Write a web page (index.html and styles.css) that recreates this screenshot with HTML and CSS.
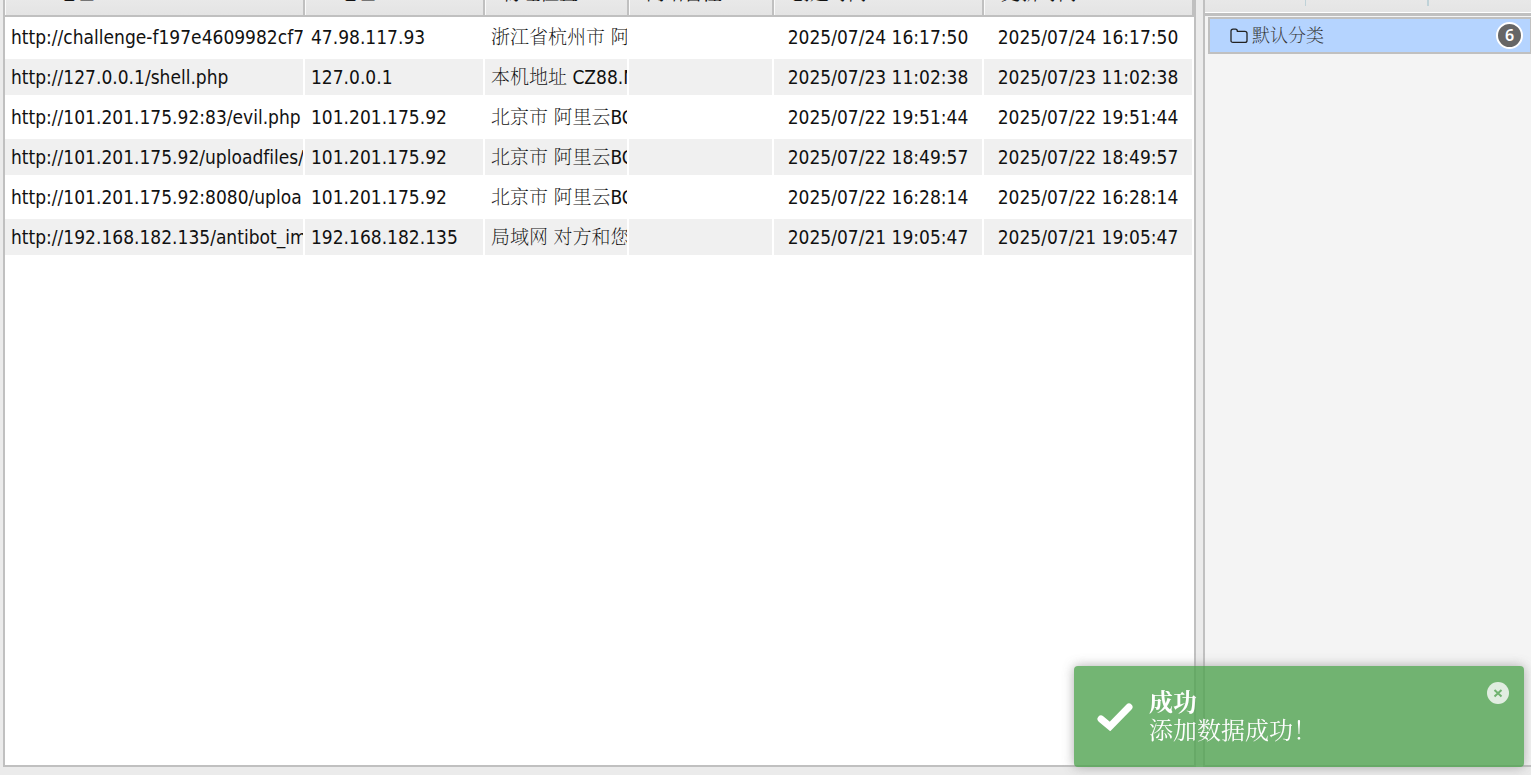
FILE: index.html
```html
<!DOCTYPE html>
<html lang="zh-CN">

<head>
    <meta charset="utf-8">
    <title>Shell</title>
    <link rel="stylesheet" href="styles.css">
</head>

<body>
    <div class="app">
        <main class="list">
            <table class="grid">
                <colgroup>
                    <col>
                    <col class="col-ip">
                    <col class="col-addr">
                    <col class="col-note">
                    <col class="col-time">
                    <col class="col-time">
                </colgroup>
                <thead>
                    <tr>
                        <th>URL地址</th>
                        <th>IP地址</th>
                        <th>物理位置</th>
                        <th>网站备注</th>
                        <th>创建时间</th>
                        <th>更新时间</th>
                    </tr>
                </thead>
                <tbody>
                    <tr>
                        <td>http://challenge-f197e4609982cf7</td>
                        <td>47.98.117.93</td>
                        <td>浙江省杭州市 阿</td>
                        <td></td>
                        <td class="time">2025/07/24 16:17:50</td>
                        <td class="time">2025/07/24 16:17:50</td>
                    </tr>
                    <tr>
                        <td>http://127.0.0.1/shell.php</td>
                        <td>127.0.0.1</td>
                        <td>本机地址 CZ88.N</td>
                        <td></td>
                        <td class="time">2025/07/23 11:02:38</td>
                        <td class="time">2025/07/23 11:02:38</td>
                    </tr>
                    <tr>
                        <td>http://101.201.175.92:83/evil.php</td>
                        <td>101.201.175.92</td>
                        <td>北京市 阿里云BG</td>
                        <td></td>
                        <td class="time">2025/07/22 19:51:44</td>
                        <td class="time">2025/07/22 19:51:44</td>
                    </tr>
                    <tr>
                        <td>http://101.201.175.92/uploadfiles/</td>
                        <td>101.201.175.92</td>
                        <td>北京市 阿里云BG</td>
                        <td></td>
                        <td class="time">2025/07/22 18:49:57</td>
                        <td class="time">2025/07/22 18:49:57</td>
                    </tr>
                    <tr>
                        <td>http://101.201.175.92:8080/uploa</td>
                        <td>101.201.175.92</td>
                        <td>北京市 阿里云BG</td>
                        <td></td>
                        <td class="time">2025/07/22 16:28:14</td>
                        <td class="time">2025/07/22 16:28:14</td>
                    </tr>
                    <tr>
                        <td>http://192.168.182.135/antibot_im</td>
                        <td>192.168.182.135</td>
                        <td>局域网 对方和您</td>
                        <td></td>
                        <td class="time">2025/07/21 19:05:47</td>
                        <td class="time">2025/07/21 19:05:47</td>
                    </tr>
                </tbody>
            </table>
        </main>

        <aside class="side">
            <div class="toolbar">
                <span class="sep"></span>
                <span class="sep wide"></span>
            </div>
            <a class="category" href="#">
                <svg class="folder" viewBox="0 0 18 16" aria-hidden="true">
                    <path d="M1 3.2Q1 1.2 3 1.2H5.6Q7.3 1.2 7.4 3.4H14.8Q17 3.4 17 5.4V12.4Q17 14.4 15 14.4H3Q1 14.4 1 12.4Z" />
                </svg>
                <span>默认分类</span>
                <span class="badge">6</span>
            </a>
        </aside>
    </div>

    <div class="toast" role="status">
        <svg class="check" viewBox="0 0 36 28" aria-hidden="true">
            <path d="M4 16L13 23.5L32 4" />
        </svg>
        <div class="toast-text">
            <div class="toast-title">成功</div>
            <div>添加数据成功！</div>
        </div>
        <button class="close" type="button" aria-label="关闭">
            <svg viewBox="0 0 22 22" aria-hidden="true">
                <circle cx="11" cy="11" r="11" />
                <path d="M7.5 8L14.5 14.5M14.5 8L7.5 14.5" />
            </svg>
        </button>
    </div>
</body>

</html>
```
FILE: styles.css
```css
* {
    box-sizing: border-box;
}

body {
    margin: 0;
    overflow: hidden;
    background: #ebebeb;
    color: #111;
    font-family: Tahoma, "DejaVu Sans Condensed", "Noto Serif CJK SC", "Noto Sans CJK SC", sans-serif;
    font-size: 19px;
    font-variant-ligatures: none;
}

/* the header rows are scrolled partly above the window */
.app {
    display: flex;
    gap: 7px;
    height: calc(100vh + 24px);
    margin-top: -24px;
    padding: 0 0 8px 3px;
}

.list {
    flex: 1;
    min-width: 0;
    overflow: hidden;
    background: #fff;
    border: 2px solid #c0c0c0;
    border-top: 0;
}

.grid {
    width: 100%;
    table-layout: fixed;
    border-spacing: 0;
}

.col-ip {
    width: 180px;
}

.col-addr {
    width: 144px;
}

.col-note {
    width: 145px;
}

.col-time {
    width: 210px;
}

.grid th {
    height: 41px;
    padding: 0 0 4px 17px;
    background: linear-gradient(#f0f0f0, #e4e4e4);
    border: solid #c0c0c0;
    border-width: 0 2px 2px 0;
    box-shadow: inset 1px 0 #fafafa;
    font-weight: 400;
    line-height: 35px;
    text-align: left;
    white-space: nowrap;
}

.grid td {
    height: 40px;
    padding: 0 0 0 6px;
    overflow: hidden;
    background-clip: padding-box;
    border: solid #fff;
    border-width: 2px 2px 2px 0;
    line-height: 36px;
    white-space: nowrap;
}

.grid td:nth-child(3) {
    font-weight: 200;
}

.grid tr:nth-child(even) td {
    background-color: #f0f0f0;
}

.grid .time {
    padding: 0;
    text-align: center;
}

.side {
    width: 328px;
    background: #f4f4f4;
    border: solid #c0c0c0;
    border-width: 0 0 2px 2px;
}

.toolbar {
    display: flex;
    height: 40px;
    padding: 0 0 7px 100px;
    background: linear-gradient(#efefef, #e4e4e4);
    border-bottom: 3px solid #c0c0c0;
    box-shadow: inset 0 -1px #fff;
}

.sep {
    width: 1px;
    background: #bfd2d8;
}

.sep.wide {
    width: 2px;
    margin-left: 121px;
}

.category {
    display: flex;
    align-items: center;
    height: 37px;
    margin: 1px 0 0 3px;
    padding: 0 7px 0 20px;
    background: #b5d4ff;
    border: 2px solid #c0c0c0;
    border-right-width: 1px;
    color: #333;
    font-size: 18px;
    font-weight: 200;
    line-height: 24px;
    text-decoration: none;
}

.folder {
    width: 18px;
    height: 16px;
    margin-right: 4px;
    fill: none;
    stroke: #222;
    stroke-width: 1.3;
}

.badge {
    width: 27px;
    height: 27px;
    margin-left: auto;
    background: #666;
    border: 2px solid #fff;
    border-radius: 50%;
    color: #fff;
    font-family: "Noto Sans", sans-serif;
    font-size: 16px;
    font-weight: 600;
    line-height: 22px;
    text-align: center;
}

.toast {
    position: fixed;
    right: 7px;
    bottom: 8px;
    display: flex;
    align-items: center;
    width: 450px;
    height: 101px;
    padding: 0 15px 0 23px;
    background: #51a351;
    border-radius: 4px;
    box-shadow: 0 0 12px #999;
    color: #fff;
    font-size: 24px;
    line-height: 28px;
    opacity: 0.8;
}

.check {
    width: 36px;
    height: 28px;
    margin-right: 16px;
    fill: none;
    stroke: #fff;
    stroke-width: 7;
    stroke-linecap: round;
}

.toast-text {
    flex: 1;
}

.toast-title {
    font-weight: 700;
}

.close {
    align-self: flex-start;
    width: 22px;
    height: 22px;
    margin-top: 16px;
    padding: 0;
    background: none;
    border: 0;
    cursor: pointer;
    opacity: 0.8;
}

.close svg {
    display: block;
}

.close circle {
    fill: #fff;
}

.close path {
    stroke: #51a351;
    stroke-width: 2;
}
```
